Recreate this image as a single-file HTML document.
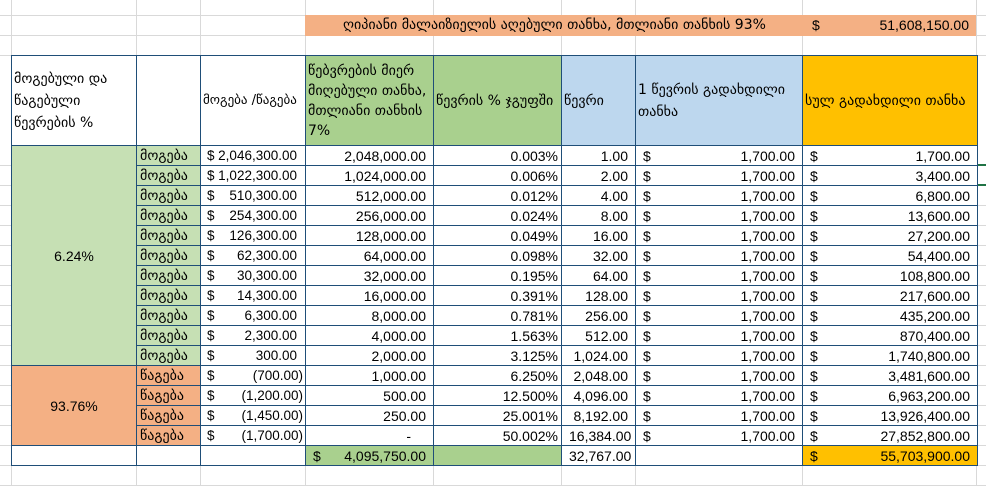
<!DOCTYPE html>
<html><head><meta charset="utf-8"><style>
*{box-sizing:border-box;margin:0;padding:0}
body{width:986px;height:485px;overflow:hidden;background:#fff;position:relative;font-family:"Liberation Sans","DejaVu Sans",sans-serif;font-size:14px;color:#000}
.gv{position:absolute;top:0;height:485px;width:1px;background:#d9d9d9}
.gh{position:absolute;left:0;width:986px;height:1px;background:#d9d9d9}
table{position:absolute;left:11px;top:55px;width:966px;border-collapse:collapse;table-layout:fixed;background:#fff}
td{border:1px solid #1f4e78;height:20px;padding:0 7px;white-space:nowrap;overflow:hidden;line-height:18px}
.hd td{height:90px;white-space:normal;line-height:22px;vertical-align:middle;padding:0 2px}
.geo{font-family:"DejaVu Sans",sans-serif;font-size:14px}
td.geo{padding:0 3px}
.r{text-align:right}
.e{padding-right:3px}
.c{padding:0 2px 0 6px;font-size:13.5px}
.lg{background:#c6e0b4}.dg{background:#a9d08e}.bl{background:#bdd7ee}.go{background:#ffc000}.or{background:#f4b084}
.m{display:flex;justify-content:space-between}
.p{padding-right:6px}
</style></head><body>
<div class="gv" style="left:11px"></div><div class="gv" style="left:136px"></div><div class="gv" style="left:200px"></div><div class="gv" style="left:305px"></div><div class="gv" style="left:433px"></div><div class="gv" style="left:561px"></div><div class="gv" style="left:635px"></div><div class="gv" style="left:802px"></div><div class="gv" style="left:976px"></div>
<div class="gh" style="top:15px"></div><div class="gh" style="top:35px"></div><div class="gh" style="top:55px"></div><div class="gh" style="top:485px"></div>
<div class="gh" style="top:165px"></div><div class="gh" style="top:185px"></div><div class="gh" style="top:205px"></div><div class="gh" style="top:225px"></div><div class="gh" style="top:245px"></div><div class="gh" style="top:265px"></div><div class="gh" style="top:285px"></div><div class="gh" style="top:305px"></div><div class="gh" style="top:325px"></div><div class="gh" style="top:345px"></div><div class="gh" style="top:365px"></div><div class="gh" style="top:385px"></div><div class="gh" style="top:405px"></div><div class="gh" style="top:425px"></div><div class="gh" style="top:445px"></div><div class="gh" style="top:465px"></div>
<div style="position:absolute;left:305px;top:15px;width:671px;height:21px;background:#f4b084;line-height:21px">
<span class="geo" style="position:absolute;left:38px">ღიპიანი მალაიზიელის აღებული თანხა, მთლიანი თანხის 93%</span>
<span style="position:absolute;left:507px">$</span><span style="position:absolute;right:7px">51,608,150.00</span></div>
<div style="position:absolute;left:975px;top:164px;width:11px;height:22px;border:2px solid #217346;border-right:none"></div>
<table>
<colgroup><col style="width:125px"><col style="width:64px"><col style="width:105px"><col style="width:128px"><col style="width:128px"><col style="width:74px"><col style="width:167px"><col style="width:175px"></colgroup>
<tr class="hd geo"><td>მოგებული და წაგებული წევრების %</td><td></td><td style="white-space:nowrap;font-size:13px">მოგება /წაგება</td><td class="dg" style="line-height:20px">წებვრების მიერ მიღებული თანხა, მთლიანი თანხის 7%</td><td class="dg">წევრის % ჯგუფში</td><td class="bl">წევრი</td><td class="bl">1 წევრის გადახდილი თანხა</td><td class="go">სულ გადახდილი თანხა</td></tr>
<tr><td rowspan="11" class="lg" style="text-align:center">6.24%</td><td class="lg geo">მოგება</td><td class="c"><div class="m"><span>$</span><span class="p">2,046,300.00</span></div></td><td class="r">2,048,000.00</td><td class="r e">0.003%</td><td class="r">1.00</td><td><div class="m"><span>$</span><span>1,700.00</span></div></td><td><div class="m"><span>$</span><span>1,700.00</span></div></td></tr>
<tr><td class="lg geo">მოგება</td><td class="c"><div class="m"><span>$</span><span class="p">1,022,300.00</span></div></td><td class="r">1,024,000.00</td><td class="r e">0.006%</td><td class="r">2.00</td><td><div class="m"><span>$</span><span>1,700.00</span></div></td><td><div class="m"><span>$</span><span>3,400.00</span></div></td></tr>
<tr><td class="lg geo">მოგება</td><td class="c"><div class="m"><span>$</span><span class="p">510,300.00</span></div></td><td class="r">512,000.00</td><td class="r e">0.012%</td><td class="r">4.00</td><td><div class="m"><span>$</span><span>1,700.00</span></div></td><td><div class="m"><span>$</span><span>6,800.00</span></div></td></tr>
<tr><td class="lg geo">მოგება</td><td class="c"><div class="m"><span>$</span><span class="p">254,300.00</span></div></td><td class="r">256,000.00</td><td class="r e">0.024%</td><td class="r">8.00</td><td><div class="m"><span>$</span><span>1,700.00</span></div></td><td><div class="m"><span>$</span><span>13,600.00</span></div></td></tr>
<tr><td class="lg geo">მოგება</td><td class="c"><div class="m"><span>$</span><span class="p">126,300.00</span></div></td><td class="r">128,000.00</td><td class="r e">0.049%</td><td class="r">16.00</td><td><div class="m"><span>$</span><span>1,700.00</span></div></td><td><div class="m"><span>$</span><span>27,200.00</span></div></td></tr>
<tr><td class="lg geo">მოგება</td><td class="c"><div class="m"><span>$</span><span class="p">62,300.00</span></div></td><td class="r">64,000.00</td><td class="r e">0.098%</td><td class="r">32.00</td><td><div class="m"><span>$</span><span>1,700.00</span></div></td><td><div class="m"><span>$</span><span>54,400.00</span></div></td></tr>
<tr><td class="lg geo">მოგება</td><td class="c"><div class="m"><span>$</span><span class="p">30,300.00</span></div></td><td class="r">32,000.00</td><td class="r e">0.195%</td><td class="r">64.00</td><td><div class="m"><span>$</span><span>1,700.00</span></div></td><td><div class="m"><span>$</span><span>108,800.00</span></div></td></tr>
<tr><td class="lg geo">მოგება</td><td class="c"><div class="m"><span>$</span><span class="p">14,300.00</span></div></td><td class="r">16,000.00</td><td class="r e">0.391%</td><td class="r">128.00</td><td><div class="m"><span>$</span><span>1,700.00</span></div></td><td><div class="m"><span>$</span><span>217,600.00</span></div></td></tr>
<tr><td class="lg geo">მოგება</td><td class="c"><div class="m"><span>$</span><span class="p">6,300.00</span></div></td><td class="r">8,000.00</td><td class="r e">0.781%</td><td class="r">256.00</td><td><div class="m"><span>$</span><span>1,700.00</span></div></td><td><div class="m"><span>$</span><span>435,200.00</span></div></td></tr>
<tr><td class="lg geo">მოგება</td><td class="c"><div class="m"><span>$</span><span class="p">2,300.00</span></div></td><td class="r">4,000.00</td><td class="r e">1.563%</td><td class="r">512.00</td><td><div class="m"><span>$</span><span>1,700.00</span></div></td><td><div class="m"><span>$</span><span>870,400.00</span></div></td></tr>
<tr><td class="lg geo">მოგება</td><td class="c"><div class="m"><span>$</span><span class="p">300.00</span></div></td><td class="r">2,000.00</td><td class="r e">3.125%</td><td class="r">1,024.00</td><td><div class="m"><span>$</span><span>1,700.00</span></div></td><td><div class="m"><span>$</span><span>1,740,800.00</span></div></td></tr>
<tr><td rowspan="4" class="or" style="text-align:center">93.76%</td><td class="or geo">წაგება</td><td class="c"><div class="m"><span>$</span><span>(700.00)</span></div></td><td class="r">1,000.00</td><td class="r e">6.250%</td><td class="r">2,048.00</td><td><div class="m"><span>$</span><span>1,700.00</span></div></td><td><div class="m"><span>$</span><span>3,481,600.00</span></div></td></tr>
<tr><td class="or geo">წაგება</td><td class="c"><div class="m"><span>$</span><span>(1,200.00)</span></div></td><td class="r">500.00</td><td class="r e">12.500%</td><td class="r">4,096.00</td><td><div class="m"><span>$</span><span>1,700.00</span></div></td><td><div class="m"><span>$</span><span>6,963,200.00</span></div></td></tr>
<tr><td class="or geo">წაგება</td><td class="c"><div class="m"><span>$</span><span>(1,450.00)</span></div></td><td class="r">250.00</td><td class="r e">25.001%</td><td class="r">8,192.00</td><td><div class="m"><span>$</span><span>1,700.00</span></div></td><td><div class="m"><span>$</span><span>13,926,400.00</span></div></td></tr>
<tr><td class="or geo">წაგება</td><td class="c"><div class="m"><span>$</span><span>(1,700.00)</span></div></td><td class="r" style="padding-right:22px">-</td><td class="r e">50.002%</td><td class="r">16,384.00</td><td><div class="m"><span>$</span><span>1,700.00</span></div></td><td><div class="m"><span>$</span><span>27,852,800.00</span></div></td></tr>
<tr><td></td><td></td><td></td><td class="dg"><div class="m"><span>$</span><span>4,095,750.00</span></div></td><td class="dg"></td><td class="r">32,767.00</td><td></td><td class="go"><div class="m"><span>$</span><span>55,703,900.00</span></div></td></tr>
</table>
</body></html>
